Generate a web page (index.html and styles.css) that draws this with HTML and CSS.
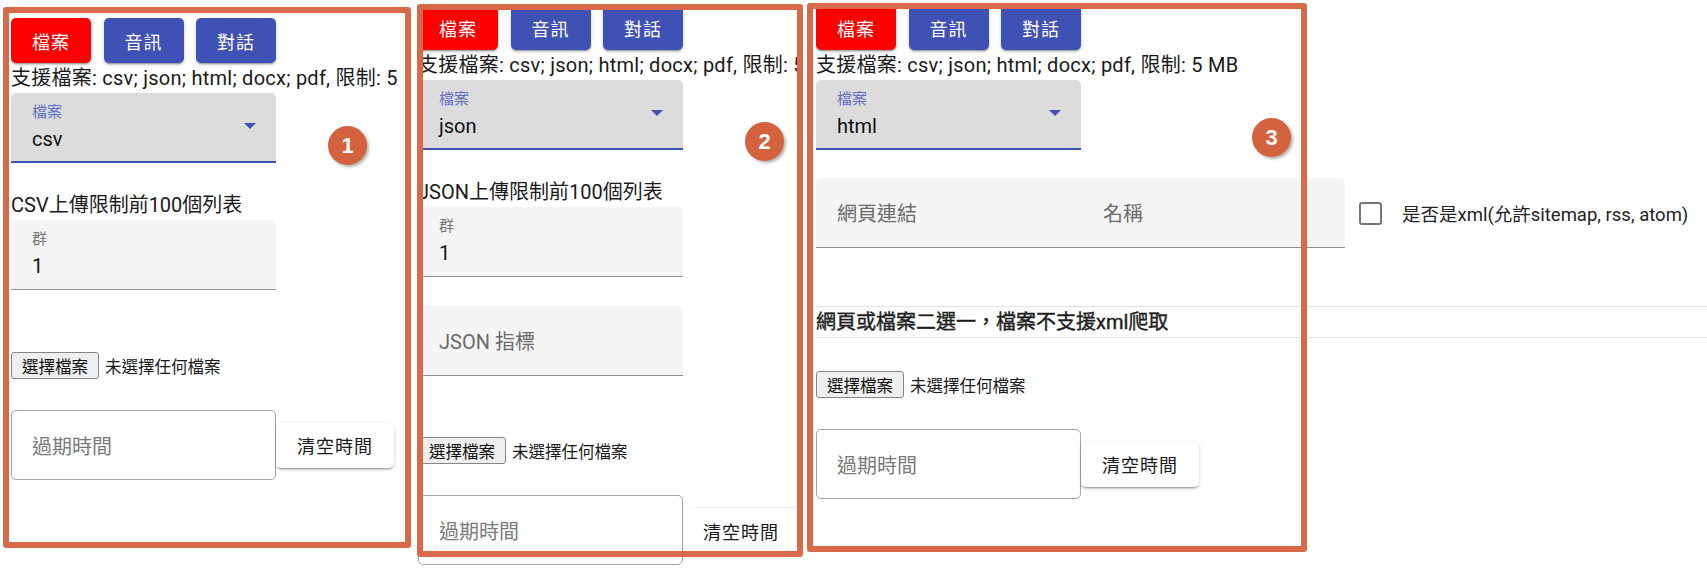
FILE: index.html
```html
<!DOCTYPE html>
<html lang="zh-Hant">
<head>
<meta charset="utf-8">
<title>上傳檔案</title>
<link rel="stylesheet" href="styles.css">
</head>
<body>
<div class="page">

  <section class="shot shot-1">
    <div class="shot-clip clip-1">
      <div class="tabs">
        <button class="tab tab-active">檔案</button>
        <button class="tab">音訊</button>
        <button class="tab">對話</button>
      </div>
      <p class="support">支援檔案: csv; json; html; docx; pdf, 限制: 5 MB</p>
      <div class="select">
        <div class="select-text">
          <span class="select-label">檔案</span>
          <span class="select-value">csv</span>
        </div>
        <span class="select-arrow"></span>
      </div>
      <p class="note">CSV上傳限制前100個列表</p>
      <div class="filled">
        <span class="filled-label">群</span>
        <span class="filled-value">1</span>
      </div>
      <div class="file file-after-field">
        <span class="file-btn">選擇檔案</span>
        <span class="file-text">未選擇任何檔案</span>
      </div>
      <div class="expire-row">
        <div class="outlined">過期時間</div>
        <button class="clear-btn">清空時間</button>
      </div>
    </div>
    <div class="frame frame-1"></div>
    <div class="badge badge-1">1</div>
  </section>

  <section class="shot shot-2">
    <div class="shot-clip clip-2">
      <div class="tabs">
        <button class="tab tab-active">檔案</button>
        <button class="tab">音訊</button>
        <button class="tab">對話</button>
      </div>
      <p class="support">支援檔案: csv; json; html; docx; pdf, 限制: 5 MB</p>
      <div class="select">
        <div class="select-text">
          <span class="select-label">檔案</span>
          <span class="select-value">json</span>
        </div>
        <span class="select-arrow"></span>
      </div>
      <p class="note">JSON上傳限制前100個列表</p>
      <div class="filled">
        <span class="filled-label">群</span>
        <span class="filled-value">1</span>
      </div>
      <div class="filled filled-empty filled-stacked">JSON 指標</div>
      <div class="file file-after-field">
        <span class="file-btn">選擇檔案</span>
        <span class="file-text">未選擇任何檔案</span>
      </div>
      <div class="expire-row expire-row-spaced">
        <div class="outlined">過期時間</div>
        <button class="clear-btn clear-btn-flat">清空時間</button>
      </div>
    </div>
    <div class="frame frame-2"></div>
    <div class="badge badge-2">2</div>
  </section>

  <section class="shot shot-3">
    <div class="shot-clip clip-3">
      <div class="tabs">
        <button class="tab tab-active">檔案</button>
        <button class="tab">音訊</button>
        <button class="tab">對話</button>
      </div>
      <p class="support">支援檔案: csv; json; html; docx; pdf, 限制: 5 MB</p>
      <div class="select">
        <div class="select-text">
          <span class="select-label">檔案</span>
          <span class="select-value">html</span>
        </div>
        <span class="select-arrow"></span>
      </div>
      <div class="link-row">
        <div class="filled filled-empty filled-left">網頁連結</div>
        <div class="filled filled-empty filled-right">名稱</div>
        <label class="check">
          <span class="check-box"></span>
          <span class="check-label">是否是xml(允許sitemap, rss, atom)</span>
        </label>
      </div>
      <div class="table-row">網頁或檔案二選一，檔案不支援xml爬取</div>
      <div class="file file-after-table">
        <span class="file-btn">選擇檔案</span>
        <span class="file-text">未選擇任何檔案</span>
      </div>
      <div class="expire-row">
        <div class="outlined">過期時間</div>
        <button class="clear-btn">清空時間</button>
      </div>
    </div>
    <div class="frame frame-3"></div>
    <div class="badge badge-3">3</div>
  </section>

</div>
</body>
</html>
```

FILE: styles.css
```css
* {
  box-sizing: border-box;
}

html, body {
  margin: 0;
  padding: 0;
  background: #ffffff;
}

body {
  font-family: Roboto, "Noto Sans CJK TC", "Noto Sans", sans-serif;
  color: #1a1a1a;
  width: 1707px;
  height: 581px;
  overflow: hidden;
}

.page {
  display: flex;
  align-items: flex-start;
}

/* ---------- screenshot panels ---------- */
.shot {
  position: relative;
  flex: none;
}

.shot-1 {
  margin-left: 11px;
  padding-top: 18px;
}

.shot-2 {
  margin-left: 15px;
  padding-top: 5px;
}

.shot-3 {
  margin-left: 17px;
  padding-top: 5px;
}

.shot-clip {
  display: flex;
  flex-direction: column;
  align-items: flex-start;
  overflow: hidden;
}

.clip-1 {
  width: 392px;
  height: 530px;
}

.clip-2 {
  width: 381px;
  height: 570px;
}

.clip-3 {
  width: 891px;
  height: 570px;
}

/* ---------- annotation frames and badges ---------- */
.frame {
  position: absolute;
  border: 6px solid #d9694b;
  border-radius: 3px;
  pointer-events: none;
}

.frame-1 {
  left: -8px;
  top: 7px;
  width: 408px;
  height: 541px;
}

.frame-2 {
  left: -1px;
  top: 4px;
  width: 386px;
  height: 553px;
}

.frame-3 {
  left: -9px;
  top: 3px;
  width: 500px;
  height: 549px;
}

.badge {
  position: absolute;
  width: 39px;
  height: 39px;
  border-radius: 50%;
  background: #d5623f;
  color: #ffffff;
  font-family: "Liberation Sans", Arial, sans-serif;
  font-weight: 700;
  font-size: 22px;
  display: flex;
  align-items: center;
  justify-content: center;
  box-shadow: 2px 2px 3px rgba(0, 0, 0, 0.3);
}

.badge-1 {
  left: 317px;
  top: 126px;
}

.badge-2 {
  left: 327px;
  top: 122px;
}

.badge-3 {
  left: 436px;
  top: 118px;
}

/* ---------- tab buttons ---------- */
.tabs {
  display: flex;
  gap: 12.5px;
  height: 45px;
  flex: none;
}

.tab {
  width: 80px;
  height: 45px;
  border: none;
  border-radius: 5px;
  background: #3f51b5;
  color: #ffffff;
  font-family: inherit;
  font-size: 18px;
  font-weight: 400;
  letter-spacing: 1px;
  padding: 0;
  box-shadow: 0 3px 1px -2px rgba(0, 0, 0, 0.2), 0 2px 2px 0 rgba(0, 0, 0, 0.14), 0 1px 5px 0 rgba(0, 0, 0, 0.12);
}

.tab-active {
  background: #ff0000;
}

/* ---------- texts ---------- */
.support {
  margin: 0;
  font-size: 20px;
  letter-spacing: 0.25px;
  line-height: 30px;
  white-space: nowrap;
  flex: none;
}

.note {
  margin: 27px 0 0;
  font-size: 20px;
  line-height: 30px;
  white-space: nowrap;
  flex: none;
}

/* ---------- filled select ---------- */
.select {
  width: 265px;
  height: 70px;
  flex: none;
  display: flex;
  align-items: flex-start;
  background: #dcdcdc;
  border-radius: 5px 5px 0 0;
  border-bottom: 2.5px solid #3f51b5;
  padding-left: 21px;
}

.select-text {
  flex: 1;
  display: flex;
  flex-direction: column;
  padding-top: 10px;
}

.select-label {
  font-size: 15px;
  line-height: 18px;
  color: #6170c4;
}

.select-value {
  margin-top: 6px;
  font-size: 20px;
  line-height: 24px;
  color: #111111;
}

.select-arrow {
  margin-top: 30px;
  margin-right: 20px;
  width: 0;
  height: 0;
  border-left: 6px solid transparent;
  border-right: 6px solid transparent;
  border-top: 6px solid #3f51b5;
}

/* ---------- filled text fields ---------- */
.filled {
  width: 265px;
  height: 70px;
  flex: none;
  display: flex;
  flex-direction: column;
  background: #f5f5f5;
  border-radius: 5px 5px 0 0;
  border-bottom: 1.25px solid #8f8f8f;
  padding: 10px 0 0 21px;
}

.filled-label {
  font-size: 15px;
  line-height: 18px;
  color: #757575;
}

.filled-value {
  margin-top: 6px;
  font-size: 20px;
  line-height: 24px;
  color: #111111;
}

.filled-empty {
  padding-top: 0;
  justify-content: center;
  font-size: 20px;
  color: #6b6b6b;
}

.filled-stacked {
  margin-top: 29px;
}

.filled-left {
  width: 266px;
  border-radius: 5px 0 0 0;
}

.filled-right {
  width: 263px;
  border-radius: 0 5px 0 0;
}

/* ---------- html link row ---------- */
.link-row {
  margin-top: 28px;
  display: flex;
  align-items: center;
  flex: none;
}

.check {
  display: flex;
  align-items: center;
  margin-left: 14px;
}

.check-box {
  width: 23px;
  height: 23px;
  border: 2.5px solid #757575;
  border-radius: 3px;
}

.check-label {
  margin-left: 20px;
  font-size: 18.5px;
  color: #222222;
  white-space: nowrap;
}

.table-row {
  margin-top: 58px;
  width: 891px;
  height: 32px;
  flex: none;
  border-top: 1px solid #e0e0e0;
  border-bottom: 1px solid #e0e0e0;
  font-size: 20px;
  font-weight: 400;
  -webkit-text-stroke: 0.4px #1e1e1e;
  line-height: 30px;
  color: #1e1e1e;
  white-space: nowrap;
}

/* ---------- file input ---------- */
.file {
  display: flex;
  align-items: center;
  gap: 6px;
  height: 27px;
  flex: none;
}

.file-after-field {
  margin-top: 62px;
}

.shot-2 .file-after-field {
  margin-top: 61px;
}

.file-after-table {
  margin-top: 33px;
}

.file-btn {
  height: 27px;
  display: flex;
  align-items: center;
  padding: 0 10px;
  background: #efefef;
  border: 1px solid #858585;
  border-radius: 3px;
  font-size: 16.5px;
  color: #111111;
}

.file-text {
  font-size: 16.5px;
  color: #1a1a1a;
}

/* ---------- expire row ---------- */
.expire-row {
  margin-top: 31px;
  display: flex;
  align-items: center;
  flex: none;
}

.expire-row-spaced {
  gap: 6px;
}

.outlined {
  width: 265px;
  height: 70px;
  display: flex;
  align-items: center;
  padding-left: 20px;
  border: 1.25px solid #a3a3a3;
  border-radius: 5px;
  font-size: 20px;
  color: #7a7a7a;
}

.clear-btn {
  width: 118px;
  height: 45px;
  border: none;
  border-radius: 5px;
  background: #ffffff;
  color: #1a1a1a;
  font-family: inherit;
  font-size: 18px;
  letter-spacing: 1px;
  padding: 0;
  box-shadow: 0 3px 1px -2px rgba(0, 0, 0, 0.2), 0 2px 2px 0 rgba(0, 0, 0, 0.14), 0 1px 5px 0 rgba(0, 0, 0, 0.12);
}

.clear-btn-flat {
  align-self: flex-start;
  margin-top: 13px;
  text-align: left;
  padding-left: 14px;
  box-shadow: 0 -1px 0 #eeeeee;
}
```
